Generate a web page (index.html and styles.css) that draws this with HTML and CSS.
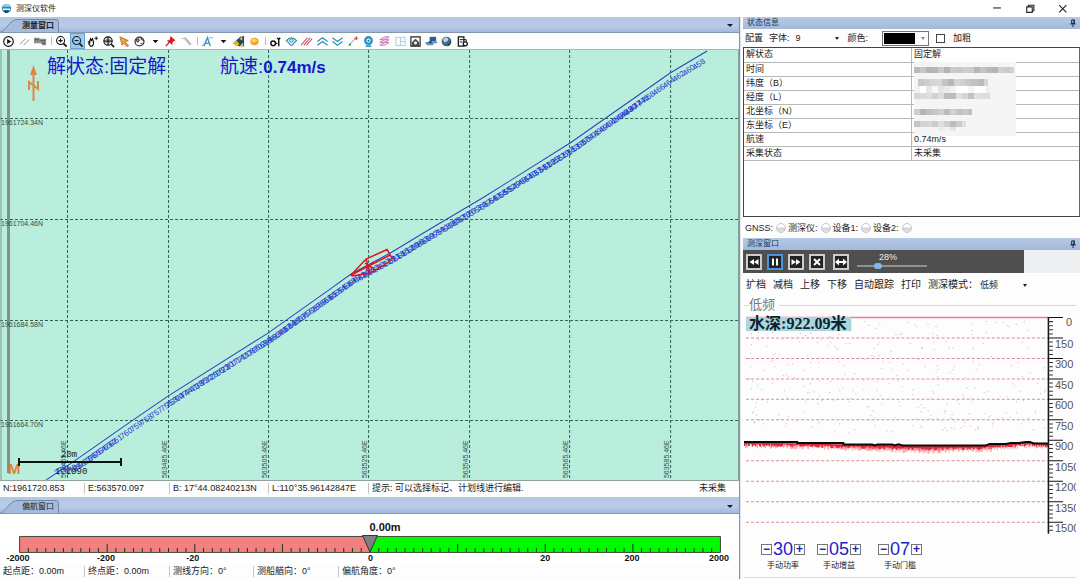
FILE: index.html
```html
<!DOCTYPE html>
<html lang="zh-CN">
<head>
<meta charset="utf-8">
<title>测深仪软件</title>
<link rel="stylesheet" href="styles.css">
</head>
<body>
<div class="app">
  <header class="titlebar">
    <svg class="logo" viewBox="0 0 12 12" aria-hidden="true"><circle cx="6" cy="6" r="5" fill="#2f7fb0"/><path d="M1.5 4a5 5 0 0 1 9 0z" fill="#9fd0e6"/><path d="M2 6h8v2H2z" fill="#e8f4fa"/><path d="M3 8h6l-2 3H5z" fill="#124a73"/></svg>
    <h1 class="apptitle">测深仪软件</h1>
    <div class="winbtns">
      <button class="winbtn" aria-label="最小化"><svg viewBox="0 0 10 10"><path d="M2 4.5h7" /></svg></button>
      <button class="winbtn" aria-label="还原"><svg viewBox="0 0 10 10"><path d="M2.5 3.500h5v5h-5zM4 3.500v-1.500h5v5h-1.500"/></svg></button>
      <button class="winbtn" aria-label="关闭"><svg viewBox="0 0 10 10"><path d="M2 2l6.500 6.500M8.500 2L2 8.500"/></svg></button>
    </div>
  </header>

  <main class="left">
    <div class="band">
      <button class="tab tab-active"><svg class="tabshape" viewBox="0 0 60 14" preserveAspectRatio="none" aria-hidden="true"><path d="M0.500 14C7 12 9 2 17 1.500H56Q58.500 1.500 58.500 4V14"/></svg><span>测量窗口</span></button>
      <button class="caret" aria-label="窗口列表"></button>
    </div>
    <div class="toolbar">
      <div class="tools g3">
        <button aria-label="开始"><svg viewBox="0 0 14 14"><circle cx="7" cy="7" r="5.200" fill="none" stroke="#111" stroke-width="1.200"/><path d="M5.500 4.300L10 7l-4.500 2.700z" fill="#111"/></svg></button>
        <button aria-label="测线"><svg viewBox="0 0 14 14"><path d="M2 10l6-6M6 11l6-6" stroke="#b5b5b5" stroke-width="1.200"/></svg></button>
        <button aria-label="船舶"><svg viewBox="0 0 14 14"><path d="M0 3h6v1h7v7H9l-1-2H0z" fill="#8b8e8c"/><path d="M1 5h4M8 9h4M7 6h5" stroke="#505654"/></svg></button>
      </div>
      <i class="sep"></i>
      <div class="tools g7">
        <button aria-label="放大"><svg viewBox="0 0 14 14"><circle cx="6" cy="6" r="4.300" fill="none" stroke="#111" stroke-width="1.100"/><path d="M3.800 6h4.400M6 3.800v4.400" stroke="#111" stroke-width="1.200"/><path d="M9 9l3.500 3.500" stroke="#111" stroke-width="1.800"/></svg></button>
        <button class="on" aria-label="缩小"><svg viewBox="0 0 14 14"><circle cx="6" cy="6" r="4.300" fill="none" stroke="#123" stroke-width="1.100"/><path d="M3.800 6h4.400" stroke="#123" stroke-width="1.200"/><path d="M9 9l3.500 3.500" stroke="#123" stroke-width="1.800"/></svg></button>
        <button aria-label="平移"><svg viewBox="0 0 14 14"><path d="M2 7l2 1.500V5M4 7l1-3 1 2 1-2 1 3v3l-1.500 2H5L3 9.500z" fill="none" stroke="#111" stroke-width="1.200"/><path d="M11 1.500v4M9 3.500h4" stroke="#111"/></svg></button>
        <button aria-label="全图"><svg viewBox="0 0 14 14"><circle cx="6.500" cy="6.500" r="4.500" fill="none" stroke="#111" stroke-width="1.200"/><path d="M2 6.500h9M6.500 2v9" fill="none" stroke="#111" stroke-width="1.300"/><path d="M4.500 4.500h4v4h-4z" fill="none" stroke="#555" stroke-width=".7"/><path d="M10 10l3 3" stroke="#111" stroke-width="1.700"/></svg></button>
        <button aria-label="选择"><svg viewBox="0 0 14 14"><path d="M2 2l9 4-3.500 1.300 4 4-1.500 1.500-4-4L4.500 11z" fill="#f0a63c" stroke="#a65e22" stroke-width=".8"/></svg></button>
        <button aria-label="地球"><svg viewBox="0 0 14 14"><circle cx="7" cy="7" r="4.800" fill="#fff" stroke="#333" stroke-width="1.300"/><path d="M3 5l3-1 1 2-2 2zM8 2l1 3 3 1M8 9l3 1" fill="#888" stroke="#333"/></svg></button>
        <button aria-label="更多视图"><svg viewBox="0 0 14 14"><path d="M4 5.500h6L7 9z" fill="#111"/></svg></button>
      </div>
      <div class="tools g2">
        <button aria-label="标记"><svg viewBox="0 0 14 14"><path d="M7 1l5.500 5-2 .5-1.500 2 .2 2.500L3 6l3-.5z" fill="#d81e28"/><path d="M6 7.500L2 12" stroke="#b02028" stroke-width="1.300"/></svg></button>
        <button aria-label="工具"><svg viewBox="0 0 14 14"><path d="M2 4l4-1 6 7M5 4l6 7" fill="none" stroke="#b7b7b7" stroke-width="1.200"/></svg></button>
      </div>
      <i class="sep"></i>
      <div class="tools g4">
        <button aria-label="文字标注"><svg viewBox="0 0 14 14"><path d="M3 12L7 3l3 9M4 9h5" fill="none" stroke="#3597c6" stroke-width="1.500"/><path d="M9 3h4M1 12l3-3" stroke="#69b1d5"/></svg></button>
        <button aria-label="更多标注"><svg viewBox="0 0 14 14"><path d="M4 5.500h6L7 9z" fill="#111"/></svg></button>
        <button aria-label="编辑"><svg viewBox="0 0 14 14"><path d="M1 9l8-7 4-1v11H8l-3-1z" fill="#254965"/><path d="M1 9l4-3 3 4-3 2z" fill="#f4b51e"/><path d="M8 4l3-2v4zM8 12l4-4v4z" fill="#f0c23c"/></svg></button>
        <button aria-label="亮度"><svg viewBox="0 0 14 14"><ellipse cx="7" cy="7" rx="4.500" ry="4" fill="#efa52d"/><ellipse cx="6.500" cy="6" rx="3" ry="2" fill="#ffd267"/></svg></button>
      </div>
      <i class="sep"></i>
      <div class="tools g13">
        <button aria-label="参数"><svg viewBox="0 0 14 14"><circle cx="4.500" cy="9" r="2.500" fill="none" stroke="#111" stroke-width="1.600"/><path d="M7 9h2M10.500 4v8M9 3l1.500 2L12 3" fill="none" stroke="#111" stroke-width="1.500"/></svg></button>
        <button aria-label="显示"><svg viewBox="0 0 14 14"><path d="M1.500 6Q7 0 12.500 6 10 8 8 11H6Q4 8 1.500 6z" fill="#d8f2f6" stroke="#238aa1" stroke-width="1.200"/><circle cx="7" cy="6" r="1.800" fill="none" stroke="#238aa1"/></svg></button>
        <button aria-label="断面线"><svg viewBox="0 0 14 14"><path d="M1 11l7-8M4 11l7-8M7 11l6-7" stroke="#bf3654" stroke-width="1.100"/></svg></button>
        <button aria-label="上一条"><svg viewBox="0 0 14 14"><path d="M1.500 7L7 3l5.500 4M1.500 11L7 7l5.500 4" fill="none" stroke="#278fb2" stroke-width="1.300"/></svg></button>
        <button aria-label="下一条"><svg viewBox="0 0 14 14"><path d="M1.500 3L7 7l5.500-4M1.500 7L7 11l5.500-4" fill="none" stroke="#278fb2" stroke-width="1.300"/></svg></button>
        <button aria-label="连线"><svg viewBox="0 0 14 14"><path d="M3 10l6-6" stroke="#739c79"/><circle cx="3" cy="10.500" r="1.300" fill="#45a85e"/><path d="M8 3.500h4M10 1.500v4" stroke="#d13d3d" stroke-width="1.300"/></svg></button>
        <button aria-label="摄像头"><svg viewBox="0 0 14 14"><circle cx="7" cy="6" r="4.800" fill="#2b92bf"/><circle cx="7" cy="6" r="2.300" fill="#d4eef9"/><circle cx="7" cy="6" r="1" fill="#19618d"/><path d="M4 11h6v2H4z" fill="#3c9cc6"/></svg></button>
        <button aria-label="图层"><svg viewBox="0 0 14 14"><path d="M2 5l5-3h5l-5 3zM2 8l5-3h5l-5 3zM2 11l5-3h5l-5 3z" fill="#f5dcf2" stroke="#c777b8"/></svg></button>
        <button aria-label="网格"><svg viewBox="0 0 14 14"><path d="M2 2.500h10v9H2zM7 2.500v9M7 7h5" fill="#f5fbff" stroke="#accbdc"/></svg></button>
        <button aria-label="截图"><svg viewBox="0 0 14 14"><path d="M2 2h10v10H2z" fill="none" stroke="#222" stroke-width="1.200"/><path d="M3 8l4-4 4 4v4H3z" fill="#444"/><circle cx="7" cy="8.500" r="1.800" fill="#eee"/></svg></button>
        <button aria-label="设备"><svg viewBox="0 0 14 14"><path d="M5 2h7v5H5z" fill="#285da1"/><path d="M0 8l5-1h8v2H9v2H2z" fill="#6a8eac"/><path d="M3 8l4-2v3z" fill="#203a5f"/></svg></button>
        <button aria-label="网络"><svg viewBox="0 0 14 14"><circle cx="7" cy="7" r="5.200" fill="#406680"/><path d="M3 5q3-4 6-1 0 3-4 4z" fill="#b7d6e8"/><path d="M9 10q2-1 3-4 0 5-4 6z" fill="#152d43"/></svg></button>
        <button aria-label="报告"><svg viewBox="0 0 14 14"><path d="M2.500 2h6v10h-6z" fill="#fff" stroke="#111" stroke-width="1.300"/><path d="M4 5h4M4 7.500h3M8 5h3v3" fill="none" stroke="#111"/><circle cx="10" cy="9.500" r="2.200" fill="#fff" stroke="#111" stroke-width="1.300"/></svg></button>
      </div>
    </div>

    <svg class="map" id="map" viewBox="0 50 739 430" preserveAspectRatio="xMinYMin slice" role="img" aria-label="航迹图">
      <g id="grid" class="gridlines"></g>
      <path d="M1 50V480M738.500 50V480" stroke="#7e9990"/>
      <path d="M8.500 50V473" stroke="#858f8b" stroke-width="3"/>
      <g id="mapcoords" class="coord"></g>
      <path class="track" d="M46 480L67 466L130 422L168 396L268 333L330 289L351 274L392 252L430 229L484 197L570 143L670 73L707 51"/>
      <g id="fixes" class="fix"></g>
      <g class="boat"><path d="M351 275L366 259L387 249.500L392 258L389 262L370 273L352 276zM351 275L390 255M366 259L370 273M365 263l8 5M373 262l-7 8"/></g>
      <g class="compass"><path d="M33.500 101V70" /><path d="M33.500 65L30 75h7z" class="solid"/><path d="M29 90v-8l9 7v-8"/></g>
      <text class="marker" x="8" y="474">M</text>
      <path d="M19 458v8M121 458v8" stroke="#07150f" stroke-width="2"/><path d="M19 462H121" stroke="#07150f" stroke-width="2"/>
      <text class="scale" x="61" y="457">20m</text><text class="scale" x="55" y="474">1:1990</text>
      <text class="big" x="47" y="73">解状态:固定解</text>
      <text class="big" x="220" y="73">航速:<tspan class="bigb">0.74m/s</tspan></text>
    </svg>

    <div class="status status-pos">
      <span>N:1961720.853</span><span>E:563570.097</span><span>B: 17°44.08240213N</span><span>L:110°35.96142847E</span><span>提示: 可以选择标记、计划线进行编辑.</span><span class="plain">未采集</span>
    </div>
    <div class="band">
      <button class="tab"><svg class="tabshape" viewBox="0 0 60 14" preserveAspectRatio="none" aria-hidden="true"><path d="M0.500 14C7 12 9 2 17 1.500H56Q58.500 1.500 58.500 4V14"/></svg><span>偏航窗口</span></button>
      <button class="caret" aria-label="窗口列表"></button>
    </div>
    <svg class="deviation" viewBox="0 514 740 49" role="img" aria-label="偏航距离">
      <rect x="19.500" y="536.500" width="351" height="16" fill="#f28080"/>
      <rect x="370.500" y="536.500" width="351" height="16" fill="#00fb00"/>
      <path d="M19.500 536.500H721.500V552.500H19.500z" fill="none" stroke="#3d4a34"/>
      <path id="devticks" stroke="#20301c"/>
      <path d="M363 535.500H378L370.500 552z" fill="#808080" stroke="#333"/>
      <text class="devval" x="370" y="531">0.00m</text>
      <g class="devnum"><text x="18" y="561">-2000</text><text x="106" y="561">-200</text><text x="193" y="561">-20</text><text x="371" y="561">0</text><text x="546" y="561">20</text><text x="633" y="561">200</text><text x="720" y="561">2000</text></g>
    </svg>
    <div class="status status-dev">
      <span>起点距：0.00m</span><span>终点距：0.00m</span><span>测线方向：0°</span><span>测船艏向：0°</span><span>偏航角度：0°</span>
    </div>
  </main>

  <aside class="right">
    <h2 class="panelhead"><span>状态信息</span><svg class="pin" viewBox="0 0 8 10" aria-hidden="true"><path d="M2.500 1h3v4h-3zM1 5.500h6M4 6v3M5 1v4" /></svg></h2>
    <div class="config">
      <button class="textbtn">配置</button>
      <label for="fs">字体:</label>
      <span class="pick pick-size"><select id="fs"><option>9</option></select></span>
      <label for="fc">颜色:</label>
      <span class="pick pick-color"><select id="fc"><option></option></select></span>
      <input type="checkbox" id="bold"><label for="bold">加粗</label>
    </div>
    <div class="tablebox">
      <table class="info">
        <tbody>
        <tr><th scope="row">解状态</th><td>固定解</td></tr>
        <tr><th scope="row">时间</th><td class="masked"><svg class="mosaic" id="mosaic" viewBox="0 0 102 74" aria-hidden="true"></svg></td></tr>
        <tr><th scope="row">纬度（B）</th><td></td></tr>
        <tr><th scope="row">经度（L）</th><td></td></tr>
        <tr><th scope="row">北坐标（N）</th><td></td></tr>
        <tr><th scope="row">东坐标（E）</th><td></td></tr>
        <tr><th scope="row">航速</th><td>0.74m/s</td></tr>
        <tr><th scope="row">采集状态</th><td>未采集</td></tr>
        </tbody>
      </table>
    </div>
    <div class="leds"><span>GNSS:</span><i class="led"></i><span>测深仪:</span><i class="led"></i><span>设备1:</span><i class="led"></i><span>设备2:</span><i class="led"></i></div>

    <h2 class="panelhead"><span>测深窗口</span><svg class="pin" viewBox="0 0 8 10" aria-hidden="true"><path d="M2.500 1h3v4h-3zM1 5.500h6M4 6v3M5 1v4" /></svg></h2>
    <div class="playrow"><div class="player">
      <button aria-label="后退"><svg viewBox="0 0 12 12"><path d="M6 3v6L1.500 6zM10.500 3v6L6 6z"/></svg></button>
      <button class="active" aria-label="暂停"><svg viewBox="0 0 12 12"><path d="M3 2.500h2v7H3zM7 2.500h2v7H7z"/></svg></button>
      <button aria-label="前进"><svg viewBox="0 0 12 12"><path d="M6 3v6l4.500-3zM1.500 3v6L6 6z"/></svg></button>
      <button aria-label="停止"><svg viewBox="0 0 12 12"><path d="M3 3l6 6M9 3L3 9" class="ln"/></svg></button>
      <button aria-label="适应宽度"><svg viewBox="0 0 12 12"><path d="M2 6h8" class="ln"/><path d="M0 6l4-3.500v7zM12 6L8 2.500v7z"/></svg></button>
      <div class="speed"><label for="sp">28%</label><input id="sp" type="range" min="0" max="100" value="28"></div>
    </div></div>
    <div class="menu">
      <button class="textbtn">扩档</button><button class="textbtn">减档</button><button class="textbtn">上移</button><button class="textbtn">下移</button><button class="textbtn">自动跟踪</button><button class="textbtn">打印</button>
      <label for="mode">测深模式：</label><span class="pick pick-mode"><select id="mode"><option>低频</option></select></span>
    </div>
    <fieldset class="sounder">
      <legend>低频</legend>
      <svg class="depth" viewBox="744 313 331 223" role="img" aria-label="水深回波图">
        <g id="noise"></g>
        <path d="M746 317.500H1048" stroke="#f07c86" stroke-width="1.500"/>
        <path id="dlines" class="dlines"/>
        <path id="echo2" stroke="#ffa6ac" fill="none"/>
        <path id="echo" stroke="#d62b38" fill="none"/>
        <path class="bottomline" d="M744 441.500H797V442.500H843V444H872L874 445L877 444H892L894 445L898 444L902 445H985L989 443.500H1005L1010 442.500H1018L1025 441.500H1029L1033 443H1047"/>
        <path d="M1047.500 317V533" stroke="#111" stroke-width="1.500"/>
        <path id="dminor" stroke="#333"/><path id="dmajor" stroke="#111"/>
        <g id="dnums" class="dnum"></g>
        <rect x="746" y="317" width="105" height="14" fill="#a9d6df"/>
        <text class="dval" x="749" y="329">水深:922.09米</text>
      </svg>
      <div class="gains">
        <div class="gain"><button aria-label="功率减">−</button><output>30</output><button aria-label="功率加">+</button><span>手动功率</span></div>
        <div class="gain"><button aria-label="增益减">−</button><output>05</output><button aria-label="增益加">+</button><span>手动增益</span></div>
        <div class="gain gain-last"><button aria-label="门槛减">−</button><output>07</output><button aria-label="门槛加">+</button><span>手动门槛</span></div>
      </div>
    </fieldset>
  </aside>
</div>
<script src="charts.js"></script>
</body>
</html>
```

FILE: styles.css
```css
* { box-sizing: border-box; }
body {
  margin: 0;
  background: #f4f6f9;
  color: #222;
  font: 9px/14px "Liberation Sans", "Noto Sans CJK SC", sans-serif;
}
button, select, input { font: inherit; color: inherit; margin: 0; padding: 0; border: 0; background: none; }
h1, h2 { margin: 0; font-size: 9px; font-weight: 400; }
svg { display: block; }

.app {
  display: grid;
  grid-template-columns: 740fr 340fr;
  grid-template-rows: 17px 1fr;
  min-height: 100vh;
}

/* title bar */
.titlebar { grid-column: 1 / -1; display: flex; align-items: center; gap: 4px; padding-left: 1px; background: #fff; }
.logo { width: 11px; height: 11px; }
.apptitle { flex: 1; font-size: 8px; }
.winbtns { display: flex; gap: 22px; padding-right: 12px; }
.winbtn { width: 11px; height: 11px; }
.winbtn svg { width: 11px; fill: none; stroke: #222; stroke-width: 1; }

/* left side */
.left { display: flex; flex-direction: column; min-width: 0; border-right: 1px solid #8b949c; background: #fff; }
.band {
  display: flex;
  justify-content: space-between;
  align-items: flex-end;
  height: 17px;
  flex: none;
  background: linear-gradient(#b4c8e4, #b9cbe8 60%, #a1b9dc);
  border-bottom: 1px solid #8797ab;
}
.band:first-child { height: 16px; }
.tab { position: relative; width: 60px; height: 14px; padding-left: 16px; line-height: 13px; font-size: 8px; white-space: nowrap; }
.tab-active { font-weight: 700; }
.tab span { position: relative; }
.tabshape { position: absolute; inset: 0; width: 100%; height: 100%; fill: #a5bcdf; stroke: #7388a5; }
.caret { width: 18px; height: 14px; display: grid; place-items: center; }
.caret::after { content: ""; border: 3px solid transparent; border-top-color: #0c1b3a; border-bottom: 0; }

.toolbar { display: flex; align-items: center; height: 17px; flex: none; background: #fdfdfd; border-bottom: 1px solid #aab4b4; }
.tools { display: flex; height: 16px; }
.tools button { flex: 1; min-width: 0; display: grid; place-items: center; }
.tools svg { width: 13px; height: 13px; }
.tools .on { background: #9cc9ec; outline: 1px solid #6ba4cf; outline-offset: -1px; }
.g3 { width: 48px; }
.g7 { width: 109px; }
.g2 { width: 31px; }
.g4 { width: 62px; }
.g13 { width: 202px; }
.sep { width: 1px; height: 8px; margin: 0 2px 0 3px; background: #bbb; }

.map { flex: 1 1 430px; min-height: 0; width: 100%; background: #b9eddc; }
.gridlines { stroke: #2d6552; stroke-dasharray: 3 2; }
.coord { font-size: 7px; fill: #35504a; }
.track { fill: none; stroke: #2545c0; }
.fix { font-size: 8px; fill: #1c33cf; }
.boat { fill: none; stroke: #e31220; stroke-width: 1.5px; }
.compass { fill: none; stroke: #dd8746; stroke-width: 2px; }
.compass .solid { fill: #dd8746; stroke: none; }
.marker { font-size: 15px; font-weight: 700; fill: #e2812f; }
.scale { font-size: 9px; font-family: "Liberation Mono", monospace; fill: #122b22; }
.big { font-size: 19px; fill: #1418d0; }
.bigb { font-size: 17px; font-weight: 700; }

.status { display: grid; flex: none; align-items: center; background: #fdfdfd; white-space: nowrap; }
.status span { padding-left: 3px; line-height: 11px; }
.status span + span { border-left: 1px solid #c4c4c4; }
.status .plain { border: 0; padding-right: 13px; }
.status-pos { grid-template-columns: 84px 85px 99px 100px 1fr auto; height: 17px; padding-bottom: 2px; border-top: 1px solid #93a19c; }
.status-dev { grid-template-columns: 84px 85px 84px 85px 1fr; height: 16px; }
.deviation { width: 100%; height: auto; flex: none; }
.devval { font-size: 11px; font-weight: 700; fill: #111; }
.devnum { font-size: 9px; font-weight: 700; fill: #111; text-anchor: middle; }

/* right side */
.right { display: flex; flex-direction: column; min-width: 0; padding-left: 2px; background: #fdfdfd; border-left: 1px solid #dfe6ef; }
.panelhead {
  display: flex;
  justify-content: space-between;
  align-items: center;
  height: 12px;
  flex: none;
  padding: 0 3px 0 4px;
  font-size: 8px;
  line-height: 12px;
  color: #26364f;
  background: linear-gradient(#b6cae6, #a3b9dc);
}
.pin { width: 8px; height: 9px; fill: none; stroke: #0f1c38; }
.config { display: flex; align-items: center; height: 18px; flex: none; padding-left: 2px; }
.config label { margin-left: 6px; }
.textbtn { white-space: nowrap; }
.pick { position: relative; display: inline-flex; align-items: center; }
.pick select { appearance: none; width: 100%; }
.pick::after { content: ""; position: absolute; right: 3px; border: 2px solid transparent; border-top: 3px solid #222; border-bottom: 0; pointer-events: none; }
.pick-size { width: 46px; margin-left: 6px; }
.pick-color { width: 47px; height: 15px; margin: 0 7px 0 14px; border: 1px solid #777; }
.pick-color select { height: 100%; background: linear-gradient(#000, #000) 1px 1px / 31px 11px no-repeat; }
.pick-color::after { border-top-color: #888; }
.config input { appearance: none; width: 9px; height: 9px; border: 1px solid #444; background: #fff; }
.config input:checked { background: #444; }
.config input + label { margin-left: 8px; }

.tablebox { flex: 1 0 170px; border: 1px solid #444; border-right-color: #666; background: #fff; }
.info { width: 100%; border-collapse: collapse; table-layout: fixed; line-height: 13px; }
.info th, .info td { height: 14px; padding: 0 0 0 2px; font-weight: 400; text-align: left; border-bottom: 1px solid #b8b8b8; }
.info th { border-right: 1px solid #b8b8b8; }
.masked { position: relative; }
.mosaic { position: absolute; left: 2px; top: -1px; width: 102px; height: 74px; }

.leds { display: flex; align-items: center; height: 21px; flex: none; padding-left: 2px; }
.led { width: 10px; height: 10px; margin: 0 2px 0 3px; border: 1px solid #c4c4c4; border-radius: 50%; background: linear-gradient(#fff 30%, #d0d0d0 60%, #eee); }

.playrow { flex: none; background: #eeeff1; padding-right: 56px; }
.player { display: flex; align-items: center; gap: 5px; height: 23px; padding-left: 3px; background: #4f4f4f; }
.player button { width: 16px; height: 16px; display: grid; place-items: center; border: 2px solid #ccc; background: #222; }
.player .active { border-color: #4c94d8; }
.player button:nth-of-type(5) { margin-left: 3px; }
.player svg { width: 12px; height: 12px; fill: #fff; }
.player .ln { stroke: #fff; stroke-width: 2px; }
.speed { display: flex; flex-direction: column; width: 70px; margin-left: 3px; color: #eee; line-height: 9px; }
.speed label { padding-left: 22px; }
.speed input { appearance: none; width: 100%; height: 8px; }
.speed input::-webkit-slider-runnable-track { height: 2px; background: #909090; }
.speed input::-webkit-slider-thumb { appearance: none; width: 8px; height: 6px; margin-top: -2px; border-radius: 3px; background: #82b6e8; }

.menu { display: flex; align-items: center; gap: 7px; height: 24px; flex: none; padding-left: 3px; font-size: 10px; white-space: nowrap; }
.menu label { margin-right: -5px; }
.pick-mode { width: 50px; font-size: 9px; }

.sounder { flex: none; min-width: 0; margin: 0 4px 1px 1px; padding: 0; border: 1px solid transparent; border-width: 1px 0; border-top-color: #f1cfc6; border-bottom-color: #ddd; }
.sounder legend { margin-left: 5px; padding: 0 4px 0 0; font-size: 13px; line-height: 16px; color: #777; }
.depth { width: 100%; height: auto; }
.dlines { stroke: #dc8c92; stroke-dasharray: 3 2; }
.bottomline { fill: none; stroke: #0c0a0a; stroke-width: 2px; }
.dnum { font-size: 11px; fill: #555; }
.dval { font: 700 16px "Liberation Serif", "Noto Sans CJK SC", serif; fill: #10232c; }

.gains { display: flex; gap: 12px; padding: 2px 0 5px 17px; }
.gain { display: grid; grid-template-columns: 11px 22px 11px; align-items: center; justify-items: center; }
.gain-last { margin-left: 5px; }
.gain button { width: 11px; height: 11px; border: 1px solid #777; color: #1b21b8; font-size: 12px; line-height: 9px; font-weight: 700; display: grid; place-items: center; }
.gain output { font: 18px/20px "Liberation Sans Narrow", "Liberation Sans", sans-serif; color: #1d22cf; }
.gain span { grid-column: 1 / -1; font-size: 8px; line-height: 13px; white-space: nowrap; }
```

FILE: charts.js
```javascript
const NS = "http://www.w3.org/2000/svg";
const byId = (id) => document.getElementById(id);
function add(parent, tag, attrs, text) {
  const el = document.createElementNS(NS, tag);
  for (const k in attrs) el.setAttribute(k, attrs[k]);
  if (text !== undefined) el.textContent = text;
  parent.appendChild(el);
}
let seed = 7;
const rnd = () => (seed = (seed * 16807) % 2147483647) / 2147483647;

// map grid with its coordinates
const east = [67.5, 168.5, 268.5, 368.5, 469.5, 569.5, 670.5];
const north = [[118.5, "1961724.34N"], [219.5, "1961704.46N"], [320.5, "1961684.58N"], [420.5, "1961664.70N"]];
east.forEach((x, i) => {
  add(byId("grid"), "path", { d: `M${x} 50V480` });
  add(byId("mapcoords"), "text", { transform: `translate(${x - 2} 478) rotate(-90)` }, `${563465 + i * 20}.46E`);
});
north.forEach(([y, t]) => {
  add(byId("grid"), "path", { d: `M0 ${y}H739` });
  add(byId("mapcoords"), "text", { x: 1, y: y + 6 }, t);
});

// fix numbers along the track
const pts = [[46, 480], [67, 466], [130, 422], [168, 396], [268, 333], [330, 289], [351, 274], [392, 252], [430, 229], [484, 197], [570, 143], [670, 73], [707, 51]];
const yAt = (x) => {
  for (let i = 1; i < pts.length; i++) {
    if (x <= pts[i][0]) {
      const [a, b] = [pts[i - 1], pts[i]];
      return a[1] + (b[1] - a[1]) * (x - a[0]) / (b[0] - a[0]);
    }
  }
  return 51;
};
let n = 772;
for (let x = 57; x < 698;) {
  const y = Math.min(yAt(x) + 12, 476);
  add(byId("fixes"), "text", { transform: `translate(${x.toFixed(1)} ${y.toFixed(1)}) rotate(-36)` }, String(n));
  const sparse = (x > 112 && x < 155) || x > 640;
  x += sparse ? 10 : 4 + rnd() * 2;
  n -= x < 165 ? 1 : sparse ? 2 : 3;
}

// deviation ruler
let d = "";
for (let i = 1; i < 80; i++) {
  const x = (19.5 + i * 8.775).toFixed(1);
  d += `M${x} 552V${i % 10 === 0 ? 544 : 548}`;
}
byId("devticks").setAttribute("d", d);

// depth ruler
let major = "", minor = "", dashed = "";
for (let i = 0; i <= 10; i++) {
  const y = 317.5 + i * 20.4;
  major += `M1047 ${y}H1062`;
  for (let k = 1; k < 5; k++) if (i < 10 || k < 3) minor += `M1047 ${y + k * 4.1}H1052`;
  if (i > 0 && i !== 6) dashed += `M746 ${y}H1047`;
  add(byId("dnums"), "text", { x: i === 0 ? 1065 : 1054, y: y + (i === 0 ? 8 : 10) }, String(i * 150));
}
byId("dmajor").setAttribute("d", major);
byId("dminor").setAttribute("d", minor);
byId("dlines").setAttribute("d", dashed);

// water noise and seabed echo
for (let i = 0; i < 300; i++) {
  add(byId("noise"), "rect", { x: (748 + rnd() * 297).toFixed(0), y: (320 + rnd() * 112).toFixed(0), width: 1, height: 1, fill: rnd() > 0.5 ? "#d3b3ad" : "#b9bcb4" });
}
const bed = [[744, 442], [797, 443], [843, 444], [902, 445], [985, 445], [1005, 443], [1029, 442], [1047, 443]];
const bedAt = (x) => {
  const i = Math.max(1, bed.findIndex((p) => p[0] >= x));
  const [a, b] = [bed[i - 1], bed[i]];
  return a[1] + (b[1] - a[1]) * (x - a[0]) / (b[0] - a[0]);
};
let e = "", e2 = "";
for (let x = 744.5; x < 1047; x++) {
  const y = bedAt(x).toFixed(1);
  const deep = 2.5 * Math.max(0, 1 - Math.abs(x - 930) / 100);
  e += `M${x} ${y}v${(1 + rnd() * 3 + deep / 2).toFixed(1)}`;
  e2 += `M${x} ${y}v${(2 + rnd() * 4 + deep).toFixed(1)}`;
}
byId("echo").setAttribute("d", e);
byId("echo2").setAttribute("d", e2);

// hidden position values
const mosaic = byId("mosaic");
add(mosaic, "rect", { x: 0, y: 0, width: 102, height: 74, fill: "#f5f5f5" });
[[0, 5, 100, 6, 46], [4, 17, 70, 7, 60], [0, 24, 76, 7, 150], [0, 31, 76, 6, 70], [0, 47, 58, 6, 46], [0, 59, 52, 6, 70], [24, 65, 20, 4, 150]].forEach(([x, y, w, h, k]) => {
  for (let i = 0; i < w; i += 6) {
    const v = Math.round(150 + k / 2 + rnd() * 40);
    add(mosaic, "rect", { x: x + i, y, width: Math.min(6, w - i), height: h, fill: `rgb(${v},${v},${v})` });
  }
});
```
